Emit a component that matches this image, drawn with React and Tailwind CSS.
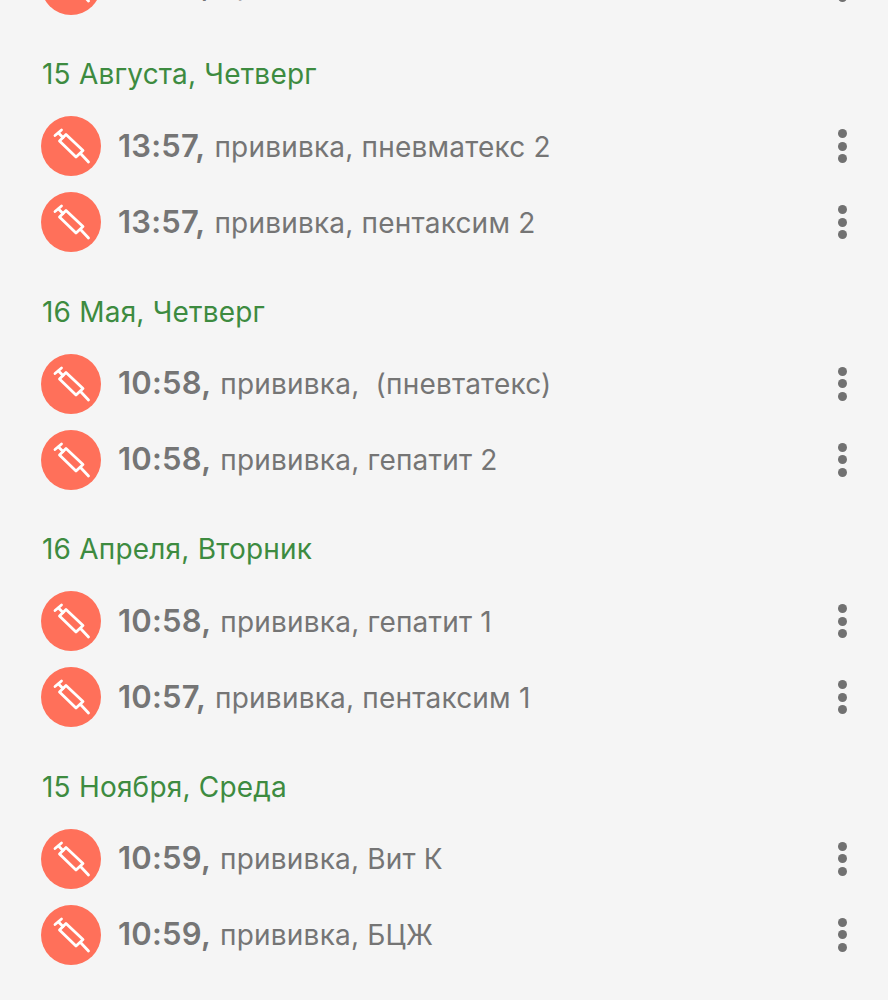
import React from 'react';

const sections = [
  {
    title: '15 Августа, Четверг',
    rows: [
      { time: '13:57', text: 'прививка, пневматекс 2' },
      { time: '13:57', text: 'прививка, пентаксим 2' },
    ],
  },
  {
    title: '16 Мая, Четверг',
    rows: [
      { time: '10:58', text: 'прививка,  (пневтатекс)' },
      { time: '10:58', text: 'прививка, гепатит 2' },
    ],
  },
  {
    title: '16 Апреля, Вторник',
    rows: [
      { time: '10:58', text: 'прививка, гепатит 1' },
      { time: '10:57', text: 'прививка, пентаксим 1' },
    ],
  },
  {
    title: '15 Ноября, Среда',
    rows: [
      { time: '10:59', text: 'прививка, Вит К' },
      { time: '10:59', text: 'прививка, БЦЖ' },
    ],
  },
];

function SyringeIcon() {
  return (
    <svg width="60" height="60" viewBox="0 0 60 60" fill="none" stroke="#fff" strokeWidth="2.8" strokeLinecap="round" strokeLinejoin="round">
      <path d="M14 19.5 L20.5 14" />
      <path d="M17.5 17 L22 21.5" />
      <path d="M18.5 25 L25 18.5 L42 34.5 L35 41 Z" />
      <path d="M40 38 L47.5 46" />
    </svg>
  );
}

function Dots() {
  return (
    <div className="flex flex-col gap-[3.5px] w-[9px]">
      <div className="w-[9px] h-[9px] rounded-full bg-[#717171]" />
      <div className="w-[9px] h-[9px] rounded-full bg-[#717171]" />
      <div className="w-[9px] h-[9px] rounded-full bg-[#717171]" />
    </div>
  );
}

function Row({ time, text }) {
  return (
    <div className="flex items-center h-[76px] pl-[41px] pr-[41px]">
      <div className="w-[60px] h-[60px] rounded-full bg-[#ff705a] shrink-0">
        <SyringeIcon />
      </div>
      <div className="ml-[17px] flex-1 whitespace-pre text-[28px] tracking-[0.2px] text-[#757575]">
        <span className="font-semibold text-[31px] tracking-[0.2px] mr-[1px]">{time},</span> {text}
      </div>
      <Dots />
    </div>
  );
}

export default function App() {
  return (
    <div className="h-[1000px] overflow-hidden bg-[#f5f5f5] font-['Inter','Noto_Sans',sans-serif]">
      <div className="mt-[-53.5px]">
        <Row time="10:59" text="прививка, гепатит" />
        {sections.map((s) => (
          <div key={s.title} className="pt-[27.5px]">
            <div className="h-[48px] mb-[10px] pl-[42px] flex items-center text-[28px] tracking-[0.2px] text-[#3d8b40]">{s.title}</div>
            {s.rows.map((r, i) => (
              <Row key={i} time={r.time} text={r.text} />
            ))}
          </div>
        ))}
      </div>
    </div>
  );
}
